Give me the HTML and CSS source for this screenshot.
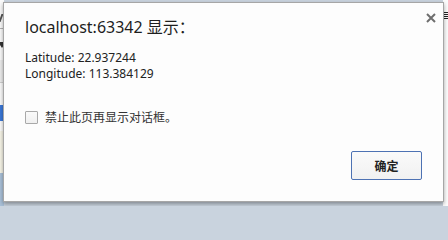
FILE: index.html
```html
<!DOCTYPE html>
<html lang="zh-CN">
<head>
<meta charset="utf-8">
<title>localhost:63342 显示</title>
<link rel="stylesheet" href="styles.css">
</head>
<body>
<div class="page">
  <div class="side side-left">
    <span class="side-glyph"></span>
    <span class="side-rule"></span>
    <span class="side-arrow"></span>
    <span class="side-gray"></span>
    <span class="side-blue"></span>
    <span class="side-white"></span>
    <span class="side-cream"></span>
    <span class="side-lightblue"></span>
  </div>
  <div class="side side-right">
    <span class="side-menu"><i></i><i></i><i></i><i></i></span>
  </div>
</div>
<div class="dialog" role="dialog">
  <div class="dialog-head">
    <h1 class="dialog-title">localhost:63342 显示：</h1>
    <button class="dialog-close" aria-label="关闭">
      <svg viewBox="0 0 10 10" width="10" height="10"><path d="M1 1 L9 9 M9 1 L1 9" stroke="#6e6e6e" stroke-width="2" fill="none"/></svg>
    </button>
  </div>
  <div class="dialog-message">
    <p>Latitude: 22.937244</p>
    <p>Longitude: 113.384129</p>
  </div>
  <label class="dialog-check">
    <span class="check-box"></span>
    <span class="check-label">禁止此页再显示对话框。</span>
  </label>
  <div class="dialog-actions">
    <button class="btn-ok">确定</button>
  </div>
</div>
</body>
</html>
```

FILE: styles.css
```css
html, body {
  margin: 0;
  padding: 0;
}
body {
  width: 448px;
  height: 206px;
  overflow: hidden;
  position: relative;
  background: #c9d3de;
  font-family: "Noto Sans", "Noto Sans CJK SC", sans-serif;
  color: #222;
}
.page {
  display: flex;
  justify-content: space-between;
  height: 206px;
}
.side {
  width: 4px;
  height: 206px;
  overflow: hidden;
  display: flex;
  flex-direction: column;
  background: #fafafa;
}
.side-glyph {
  width: 2px;
  height: 8px;
  margin-top: 14px;
  background: #555;
  transform: skewX(-20deg);
}
.side-rule {
  height: 1px;
  background: #b0b0b0;
  margin-top: 6px;
}
.side-arrow {
  width: 0;
  height: 0;
  margin: 13px 0 0 -2px;
  border-left: 4px solid transparent;
  border-right: 4px solid transparent;
  border-top: 6px solid #333;
}
.side-gray {
  height: 22px;
  margin-top: 12px;
  background: #ececec;
  border-bottom: 1px solid #cfcfcf;
}
.side-blue {
  height: 16px;
  margin-top: 22px;
  background: #3b78d8;
}
.side-white {
  height: 10px;
  background: #fbfbfb;
}
.side-cream {
  height: 42px;
  background: #f6f4e6;
}
.side-lightblue {
  flex: 1;
  background: #a9c0d8;
}
.side-right {
  background: #fcfcfc;
  width: 5px;
}
.side-menu {
  display: flex;
  flex-direction: column;
  gap: 1px;
  margin: 12px 0 0 1px;
}
.side-menu i {
  display: block;
  height: 1px;
  background: #222;
}
.dialog {
  position: absolute;
  left: 3px;
  top: 2px;
  width: 439px;
  height: 198px;
  border: 1px solid #a6a6a6;
  background: #fdfdfd;
  box-shadow: 0 2px 4px rgba(0, 0, 0, 0.35);
  display: flex;
  flex-direction: column;
}
.dialog-head {
  display: flex;
  justify-content: space-between;
  align-items: flex-start;
  padding: 0 0 0 21px;
}
.dialog-title {
  margin: 14px 0 0 0;
  font-size: 16px;
  line-height: 20px;
  font-weight: normal;
  color: #1e1e1e;
}
.dialog-close {
  margin: 10px 7px 0 0;
  padding: 0;
  border: 0;
  background: transparent;
  width: 10px;
  height: 10px;
  display: flex;
}
.dialog-message {
  padding: 0 0 0 21px;
  margin-top: 13px;
  font-size: 12px;
  line-height: 16px;
  color: #222;
}
.dialog-message p {
  margin: 0;
}
.dialog-check {
  display: flex;
  align-items: center;
  gap: 7px;
  padding-left: 21px;
  margin-top: 29px;
}
.check-box {
  width: 11px;
  height: 11px;
  border: 1px solid #a9a9a9;
  border-radius: 1px;
  background: linear-gradient(#fafafa, #f0f0f0);
}
.check-label {
  font-size: 12px;
  line-height: 13px;
  color: #333;
}
.dialog-actions {
  margin-top: auto;
  display: flex;
  justify-content: flex-end;
  padding: 0 21px 21px 0;
}
.btn-ok {
  width: 71px;
  height: 29px;
  border: 1px solid #4d72b3;
  border-radius: 2px;
  background: linear-gradient(#fafafa, #f1f1f1);
  font-family: "Noto Sans CJK SC", sans-serif;
  font-size: 12px;
  font-weight: bold;
  color: #222;
  padding: 0;
}
```
